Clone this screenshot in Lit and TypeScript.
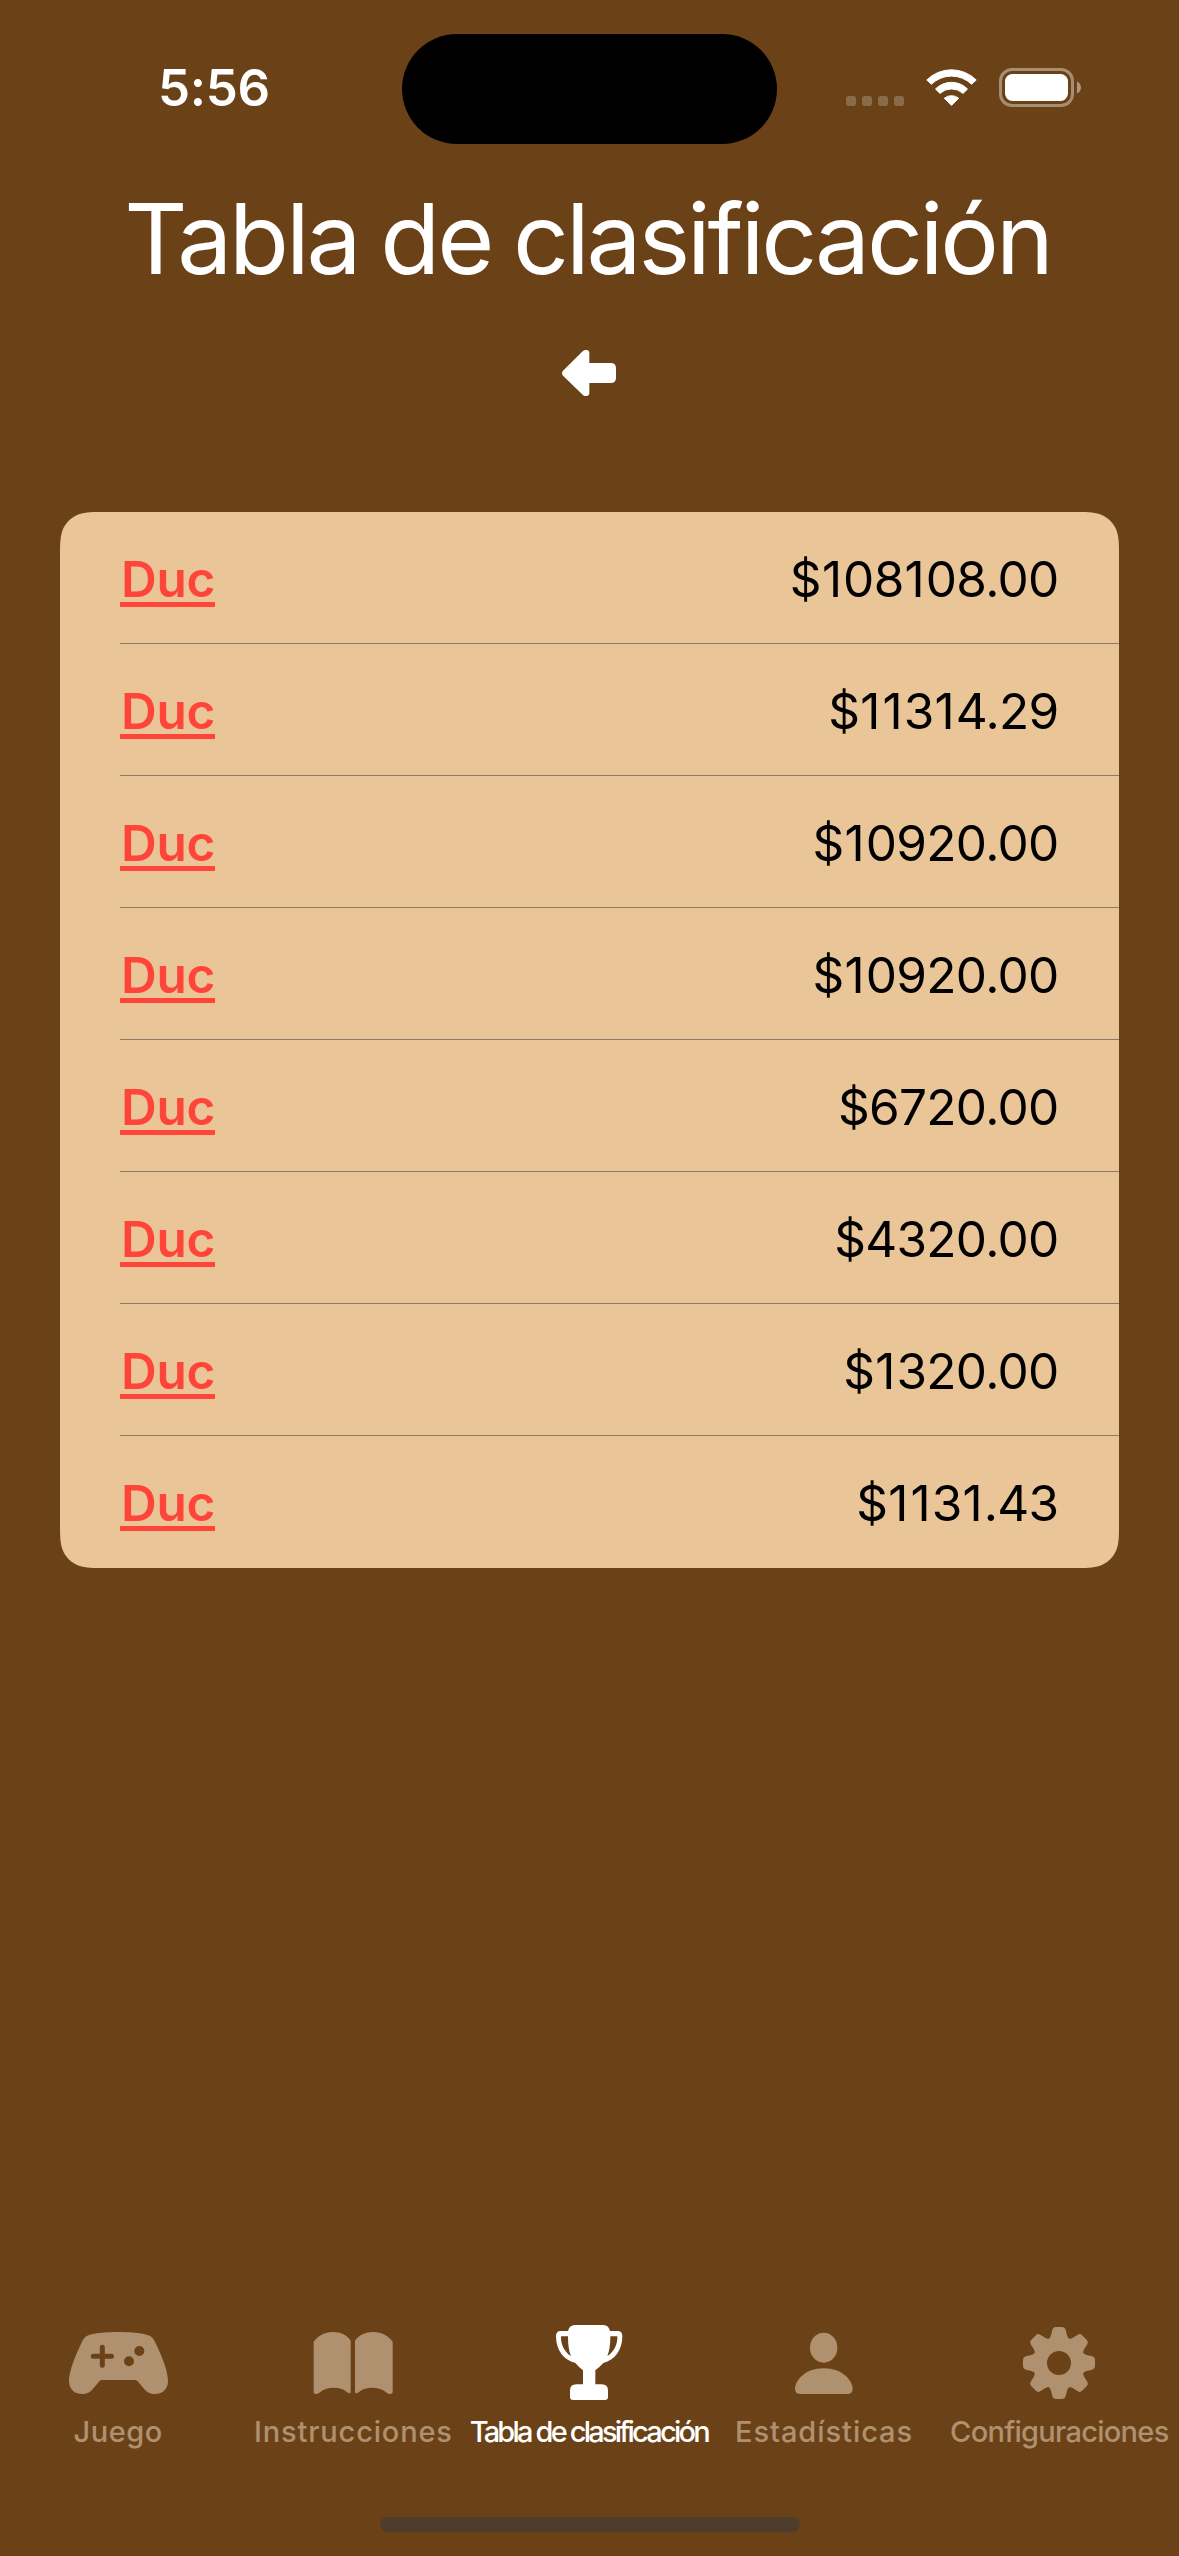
import { LitElement, html, css, svg, unsafeCSS, type SVGTemplateResult } from "lit";
import { customElement, property } from "lit/decorators.js";
import { classMap } from "lit/directives/class-map.js";

/** Rounded rectangle with continuous (smoothed) corners. */
function smoothRect(w: number, h: number, r: number): string {
  const a = 1.528665 * r, b = 1.088493 * r, c = 0.868407 * r;
  const d = 0.631494 * r, e = 0.074911 * r, f = 0.372824 * r, g = 0.16906 * r;
  const p = (x: number, y: number) => `${x.toFixed(2)} ${y.toFixed(2)}`;
  return [
    `M${p(a, 0)}L${p(w - a, 0)}`,
    `C${p(w - b, 0)} ${p(w - c, 0)} ${p(w - d, e)}`,
    `C${p(w - f, g)} ${p(w - g, f)} ${p(w - e, d)}`,
    `C${p(w, c)} ${p(w, b)} ${p(w, a)}`,
    `L${p(w, h - a)}`,
    `C${p(w, h - b)} ${p(w, h - c)} ${p(w - e, h - d)}`,
    `C${p(w - g, h - f)} ${p(w - f, h - g)} ${p(w - d, h - e)}`,
    `C${p(w - c, h)} ${p(w - b, h)} ${p(w - a, h)}`,
    `L${p(a, h)}`,
    `C${p(b, h)} ${p(c, h)} ${p(d, h - e)}`,
    `C${p(f, h - g)} ${p(g, h - f)} ${p(e, h - d)}`,
    `C${p(0, h - c)} ${p(0, h - b)} ${p(0, h - a)}`,
    `L${p(0, a)}`,
    `C${p(0, b)} ${p(0, c)} ${p(e, d)}`,
    `C${p(g, f)} ${p(f, g)} ${p(d, e)}`,
    `C${p(c, 0)} ${p(b, 0)} ${p(a, 0)}Z`,
  ].join("");
}

@customElement("status-bar")
export class StatusBar extends LitElement {
  static styles = css`
    :host { display: block; height: 177px; }
    .bar {
      display: grid;
      grid-template-columns: 402px 375px 1fr;
      padding-top: 34px;
      height: 110px;
    }
    .time {
      padding: 24px 0 0 158px;
      font-size: 51px;
      line-height: 60px;
      font-weight: 600;
      letter-spacing: -0.3px;
      color: #fff;
    }
    .island { background: #000; border-radius: 55px; }
    .signals { padding: 16px 0 0 63px; }
    svg { display: block; }
  `;
  render() {
    return html`<div class="bar">
      <div class="time">5:56</div>
      <div class="island"></div>
      <div class="signals">
        <svg width="260" height="75" viewBox="840 50 260 75" fill="#fff">
          <g opacity="0.22">
            ${[846, 862, 878, 894].map((x) => svg`<rect x=${x} y="96" width="10" height="10" rx="3"/>`)}
          </g>
          <g stroke="#fff" stroke-width="1" stroke-linejoin="round">
            <path d="M926.8 80A35 35 0 0 1 976.2 80L971.6 84.2A29 29 0 0 0 931.4 84.2Z"/>
            <path d="M935.5 89A22.5 22.5 0 0 1 967.5 89L963 93.4A17 17 0 0 0 940 93.4Z"/>
            <path d="M944.3 98.2A11.5 11.5 0 0 1 958.7 98.2L951.5 105.4Z"/>
          </g>
          <rect x="1000.5" y="69.5" width="72" height="36" rx="11.5" fill="none" stroke="#fff" stroke-opacity="0.4" stroke-width="3"/>
          <rect x="1005" y="74" width="63" height="27" rx="7.5"/>
          <path opacity="0.45" d="M1077 81.5C1082.3 83.5 1082.3 91.5 1077 93.5Z"/>
        </svg>
      </div>
    </div>`;
  }
}

@customElement("score-list")
export class ScoreList extends LitElement {
  @property({ attribute: false }) scores: { name: string; amount: string }[] = [];

  static styles = css`
    .card {
      margin: 0 60px;
      background: #eac597;
      clip-path: path("${unsafeCSS(smoothRect(1059, 1056, 30))}");
    }
    .row {
      box-sizing: border-box;
      height: 132px;
      margin-left: 60px;
      padding-right: 60.5px;
      display: flex;
      justify-content: space-between;
      align-items: flex-start;
      border-bottom: 1px solid #8c7a65;
      font-size: 49.5px;
      line-height: 60px;
    }
    .row:last-child { border-bottom-color: transparent; }
    .name {
      box-sizing: border-box;
      margin-top: 37px;
      height: 58px;
      width: 95px;
      padding-left: 1px;
      border-bottom: 5px solid #ff453a;
      color: #ff453a;
      font-weight: 600;
      letter-spacing: -0.3px;
    }
    .amount { margin-top: 37px; color: #000; letter-spacing: -0.7px; }
    .one { letter-spacing: 1.1px; margin-left: 1px; }
  `;

  /** The digit 1 is set a little wider than the face draws it. */
  private spaced(amount: string) {
    return amount.split(/(1)/).map((s) => (s === "1" ? html`<span class="one">1</span>` : s));
  }

  render() {
    return html`<div class="card">
      ${this.scores.map(
        (s) => html`<div class="row">
          <div class="name">${s.name}</div>
          <div class="amount">${this.spaced(s.amount)}</div>
        </div>`,
      )}
    </div>`;
  }
}

interface Tab {
  label: string;
  tracking: number;
  left: number;
  icon: SVGTemplateResult;
}

/** One tooth of the gear, pointing up, repeated every 45 degrees. */
const gearTooth = "M982 122Q991 114 993 106L997 89Q999 81 1007 81L1027 81Q1035 81 1037 89L1041 106Q1043 114 1052 122Z";

const tabs: Tab[] = [
  {
    label: "Juego",
    tracking: 0.5,
    left: 54,
    icon: svg`<path fill-rule="evenodd" d="M150 104C190 93.5 280 93.5 320 104C332 107.5 338 112 344 124C360 156 384 210 384 243C384 266 369 282 345 282C329 282 321 276 312 266L293 244Q290 240 285 240L186 240Q181 240 178 244L159 266C150 276 142 282 126 282C102 282 87 266 87 243C87 210 111 156 127 124C133 112 138 107.5 150 104ZM179.5 142V161.5H160A7.5 7.5 0 0 0 160 176.5H179.5V196A7.5 7.5 0 0 0 194.5 196V176.5H214.5A7.5 7.5 0 0 0 214.5 161.5H194.5V142A7.5 7.5 0 0 0 179.5 142ZM298 138A15 15 0 1 0 298 168A15 15 0 1 0 298 138ZM267 169A15 15 0 1 0 267 199A15 15 0 1 0 267 169Z"/>`,
  },
  {
    label: "Instrucciones",
    tracking: 0.83,
    left: 760,
    icon: svg`<path d="M822 126C833 108 855 96 880 96C903 96 923 106 933 122V276Q933 280 929 280Q926 280 922 276C910 267 898 263.5 882 263.5C866 263.5 850 269 839 278Q834 282 828 282Q822 282 822 276ZM1059 126C1048 108 1026 96 1001 96C978 96 957 106 946 122V276Q946 280 950 280Q953 280 958 276C969 267 982 263.5 997 263.5C1014 263.5 1030 269 1041 278Q1046 282 1052 282Q1059 282 1059 276Z"/>`,
  },
  {
    label: "Tabla de clasificación",
    tracking: -2.8,
    left: 267,
    icon: svg`<path fill-rule="evenodd" d="M405 75H490Q506 75 510 93H533Q547 93 547 109C547 150 524 181 490 189Q480 200 466 211V253H485Q504 253 504 272V291Q504 300 495 300H399Q390 300 390 291V272Q390 253 409 253H429V211Q416 201 406 189C371 181 348 150 348 109Q348 93 362 93H384Q388 75 405 75ZM384 109H363C362 135 374 157 393 168C386 152 384 133 384 109ZM511 109C511 133 509 152 502 168C521 157 533 135 532 109Z"/>`,
  },
  {
    label: "Estadísticas",
    tracking: 0.95,
    left: 132,
    icon: svg`<ellipse cx="311" cy="143" rx="41" ry="45"/><path d="M241 282Q225 282 225 267C225 242 255 205 311 205C367 205 398 242 398 267Q398 282 382 282Z"/>`,
  },
  {
    label: "Configuraciones",
    tracking: -0.72,
    left: 837,
    icon: svg`<path fill-rule="evenodd" d="M1017 110A79 79 0 1 0 1017 268A79 79 0 1 0 1017 110ZM1017 153A36 36 0 1 1 1017 225A36 36 0 1 1 1017 153Z"/>${[0, 45, 90, 135, 180, 225, 270, 315].map(
      (a) => svg`<path d=${gearTooth} transform="rotate(${a} 1017 189)"/>`,
    )}`,
  },
];

@customElement("tab-bar")
export class TabBar extends LitElement {
  static styles = css`
    .tabs {
      display: grid;
      grid-template-columns: repeat(5, 235.3px);
      padding-left: 0.5px;
    }
    .tab {
      display: flex;
      flex-direction: column;
      align-items: center;
      color: #af9170;
      white-space: nowrap;
    }
    .active { color: #fff; }
    svg { display: block; width: 120px; height: 90px; fill: currentColor; }
    .label {
      margin-top: 2px;
      font-size: 29px;
      line-height: 40px;
      font-weight: 500;
    }
    .home {
      width: 420px;
      height: 15px;
      margin: 65px auto 24px;
      border-radius: 8px;
      background: #4e3d2d;
    }
  `;
  render() {
    return html`<div class="tabs">
        ${tabs.map(
          (t, i) => html`<div class=${classMap({ tab: true, active: i === 2 })}>
            <svg viewBox="${t.left} 60 360 270">${t.icon}</svg>
            <div class="label" style="letter-spacing:${t.tracking}px">${t.label}</div>
          </div>`,
        )}
      </div>
      <div class="home"></div>`;
  }
}

@customElement("app-root")
export class AppRoot extends LitElement {
  static styles = css`
    :host {
      display: flex;
      flex-direction: column;
      width: 1179px;
      height: 2556px;
      overflow: hidden;
      background: #6b4217;
      font-family: Inter, "Liberation Sans", sans-serif;
    }
    h1 {
      margin: 0;
      height: 173px;
      padding-right: 4px;
      font-size: 98px;
      line-height: 123px;
      font-weight: 400;
      letter-spacing: -3.15px;
      word-spacing: -2.5px;
      text-align: center;
      white-space: nowrap;
      color: #fff;
    }
    .back { display: block; margin: 0 0 0 562px; width: 54px; height: 46px; }
    score-list { display: block; margin-top: 116px; }
    tab-bar { display: block; margin-top: auto; }
  `;
  private scores = [
    "$108108.00", "$11314.29", "$10920.00", "$10920.00",
    "$6720.00", "$4320.00", "$1320.00", "$1131.43",
  ].map((amount) => ({ name: "Duc", amount }));

  render() {
    return html`
      <status-bar></status-bar>
      <h1>Tabla de clasificación</h1>
      <svg class="back" viewBox="186 60 162 138" fill="#fff">
        <path d="M189 122L248 64Q253 59 260 60Q268 61 268 69V99H332Q348 99 348 115V143Q348 159 332 159H268V189Q268 197 260 198Q253 199 248 194L189 137Q183 130 189 122Z"/>
      </svg>
      <score-list .scores=${this.scores}></score-list>
      <tab-bar></tab-bar>
    `;
  }
}
